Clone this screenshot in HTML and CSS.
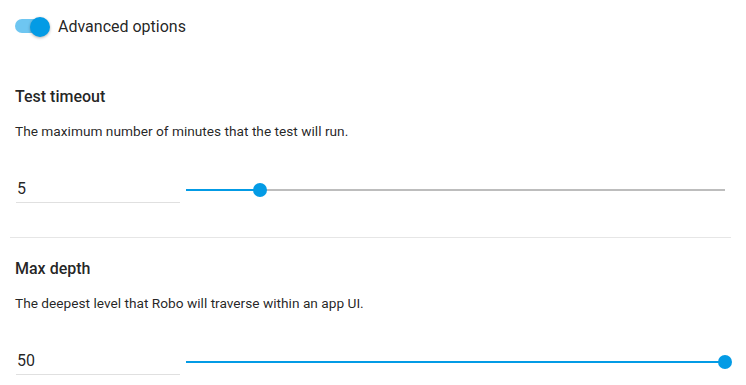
FILE: index.html
```html
<!DOCTYPE html>
<html lang="en">
<head>
  <meta charset="UTF-8" />
  <title>Advanced options</title>
  <link rel="stylesheet" href="styles.css">
</head>
<body>
  <div class="toggle-row">
    <div class="toggle"><div class="toggle-track"></div><div class="toggle-thumb"></div></div>
    <span class="toggle-label">Advanced options</span>
  </div>

  <div class="option">
    <div class="option-title">Test timeout</div>
    <div class="option-desc">The maximum number of minutes that the test will run.</div>
    <div class="option-controls">
      <div class="field">5</div>
      <div class="slider">
        <div class="slider-track"></div>
        <div class="slider-fill" style="width: 13.7%"></div>
        <div class="slider-thumb" style="left: 13.7%"></div>
      </div>
    </div>
  </div>

  <div class="divider"></div>

  <div class="option">
    <div class="option-title">Max depth</div>
    <div class="option-desc">The deepest level that Robo will traverse within an app UI.</div>
    <div class="option-controls">
      <div class="field">50</div>
      <div class="slider">
        <div class="slider-track"></div>
        <div class="slider-fill" style="width: 100%"></div>
        <div class="slider-thumb" style="left: 100%"></div>
      </div>
    </div>
  </div>
</body>
</html>
```

FILE: styles.css
```css
body {
  margin: 0;
  background: #fff;
  font-family: Roboto, 'Liberation Sans', sans-serif;
  color: rgba(0, 0, 0, 0.87);
}
.toggle-row {
  display: flex;
  align-items: center;
  padding: 16px 0 0 14px;
  height: 20px;
}
.toggle {
  position: relative;
  width: 36px;
  height: 20px;
}
.toggle-track {
  position: absolute;
  left: 1px;
  top: 3px;
  width: 34px;
  height: 14px;
  border-radius: 7px;
  background: #6ec6f1;
}
.toggle-thumb {
  position: absolute;
  left: 16px;
  top: 1px;
  width: 20px;
  height: 20px;
  border-radius: 50%;
  background: #039be5;
  box-shadow: 0 1px 3px rgba(0, 0, 0, 0.3);
}
.toggle-label {
  margin-left: 8px;
  font-size: 16px;
}
.option {
  padding: 0 0 0 15px;
}
.option-title {
  margin-top: 51px;
  font-size: 16px;
  font-weight: 500;
}
.divider + .option .option-title {
  margin-top: 21px;
}
.option-desc {
  margin-top: 17px;
  font-size: 13.7px;
}
.option-controls {
  display: flex;
  align-items: center;
  margin-top: 37px;
}
.field {
  width: 163px;
  margin-left: 1px;
  padding: 3px 0 4px 1px;
  font-size: 16px;
  border-bottom: 1px solid #e0e0e0;
}
.slider {
  position: relative;
  flex: 1;
  height: 2px;
  margin: 0 21px 0 6px;
}
.slider-track {
  position: absolute;
  inset: 0;
  background: #bdbdbd;
}
.slider-fill {
  position: absolute;
  left: 0;
  top: 0;
  height: 2px;
  background: #039be5;
}
.slider-thumb {
  position: absolute;
  top: -6px;
  width: 14px;
  height: 14px;
  margin-left: -7px;
  border-radius: 50%;
  background: #039be5;
}
.divider {
  height: 1px;
  background: #e6e6e6;
  margin: 34px 15px 0 10px;
}
```
